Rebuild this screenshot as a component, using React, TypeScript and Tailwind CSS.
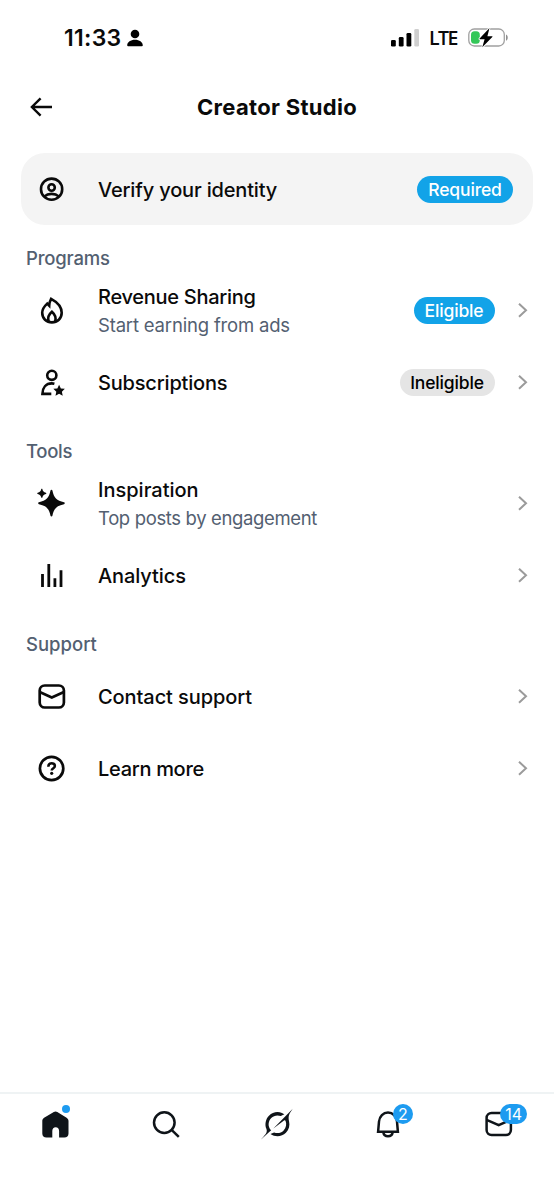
import type { ReactNode } from "react";

interface Item {
  title: string;
  titleClass: string;
  about?: string;
  aboutClass?: string;
  badge?: string;
  badgeClass?: string;
  icon: ReactNode;
}

interface Section {
  name: string;
  nameClass: string;
  items: Item[];
}

const iconProps = {
  width: 28,
  height: 28,
  viewBox: "-0.6 0 28 28",
  fill: "none",
  stroke: "currentColor",
  strokeWidth: 2.6,
  className: "shrink-0 overflow-visible",
};

const AccountIcon = () => (
  <svg {...iconProps}>
    <circle cx="14" cy="14.2" r="10.6" />
    <circle cx="14" cy="12.5" r="3.2" />
    <path d="M6.8 21.4c1.9-1.7 4.4-2.5 7.2-2.5s5.3.8 7.2 2.5" />
  </svg>
);

const FlameIcon = () => (
  <svg {...iconProps}>
    <path d="M13.5 2.8c6.4 3.4 10.6 8.7 10.6 14 0 5.7-4.3 9.6-9.8 9.6s-9.7-3.9-9.7-9.6c0-3.600 2.100-6.500 5-9.200l2 2.100c.1-2.500.7-4.700 1.900-6.900z" />
    <path d="M11.1 25.5c-1.300-3.900.1-7.100 3.200-9.700 3 2.600 4.500 5.800 3.200 9.700" />
  </svg>
);

const SubscriptionsIcon = () => (
  <svg {...iconProps}>
    <circle cx="14.2" cy="7.3" r="4.6" />
    <path d="M16.8 15.7c-.8-.2-1.700-.3-2.600-.3-5.800 0-9.300 4.300-9.400 10.500h8.900" />
    <path
      fill="currentColor"
      stroke="none"
      d="M21.5 16.7l1.75 3.7 4 .45-2.95 2.8.8 4-3.6-2-3.6 2 .8-4-2.95-2.8 4-.45z"
    />
  </svg>
);

const SparkleIcon = () => (
  <svg {...iconProps}>
    <g fill="currentColor" stroke="none">
      <path d="M12.900 1.600c.2-1 1.700-1 1.900 0 1.500 7.400 4.200 10.200 11.600 11.700 1 .2 1 1.700 0 1.900-7.400 1.500-10.100 4.200-11.600 11.600-.2 1-1.700 1-1.900 0-1.500-7.400-4.200-10.100-11.600-11.600-1-.2-1-1.700 0-1.900 7.400-1.500 10.100-4.300 11.600-11.700z" />
      <path d="M3.600.2c.1-.6 1.100-.6 1.200 0 .6 2.200 1.300 2.900 3.500 3.500.6.1.6 1.100 0 1.200-2.200.6-2.900 1.300-3.500 3.500-.1.6-1.100.6-1.200 0-.6-2.200-1.300-2.900-3.500-3.500-.6-.1-.6-1.100 0-1.200 2.200-.6 2.900-1.300 3.500-3.500z" />
    </g>
  </svg>
);

const AnalyticsIcon = () => (
  <svg {...iconProps} strokeWidth={2.8}>
    <path d="M4.900 13v13M11.200 3v23M17.300 17.300V26M23.400 9.300V26" />
  </svg>
);

const MailIcon = () => (
  <svg {...iconProps} strokeWidth={2.7}>
    <rect x="2.100" y="3.500" width="24.200" height="22" rx="5" />
    <path d="M2.100 10.100l12.100 5.400 12.100-5.400" />
  </svg>
);

const HelpIcon = () => (
  <svg {...iconProps} strokeWidth={2.7}>
    <circle cx="14" cy="14.5" r="11.7" />
    <path
      strokeWidth={2.5}
      d="M10.700 12.700c.1-2.200 1.500-3.400 3.400-3.400 1.900 0 3.200 1.100 3.200 2.800 0 2.300-3.200 2-3.200 4.500"
    />
    <circle cx="14.100" cy="19.300" r="1.600" fill="currentColor" stroke="none" />
  </svg>
);

const ChevronIcon = () => (
  <svg
    width="11"
    height="16"
    viewBox="0 0 11 16"
    fill="none"
    stroke="#9b9b9b"
    strokeWidth="2"
    className="ml-[22px] shrink-0"
  >
    <path d="M2 1.800l7 6.500-7 6.500" />
  </svg>
);

const sections: Section[] = [
  {
    name: "Programs",
    nameClass: "tracking-[-0.2px]",
    items: [
      {
        title: "Revenue Sharing",
        titleClass: "tracking-[-0.28px]",
        about: "Start earning from ads",
        aboutClass: "tracking-[-0.18px]",
        badge: "Eligible",
        badgeClass: "w-[81px] bg-[#12a3e8] text-white",
        icon: <FlameIcon />,
      },
      {
        title: "Subscriptions",
        titleClass: "tracking-[-0.18px]",
        badge: "Ineligible",
        badgeClass: "w-[95px] bg-[#e5e5e5] text-black",
        icon: <SubscriptionsIcon />,
      },
    ],
  },
  {
    name: "Tools",
    nameClass: "tracking-[-0.3px]",
    items: [
      {
        title: "Inspiration",
        titleClass: "tracking-normal",
        about: "Top posts by engagement",
        aboutClass: "tracking-[-0.36px]",
        icon: <SparkleIcon />,
      },
      {
        title: "Analytics",
        titleClass: "tracking-[-0.1px]",
        icon: <AnalyticsIcon />,
      },
    ],
  },
  {
    name: "Support",
    nameClass: "tracking-normal",
    items: [
      {
        title: "Contact support",
        titleClass: "tracking-[-0.08px]",
        icon: <MailIcon />,
      },
      {
        title: "Learn more",
        titleClass: "tracking-[-0.3px]",
        icon: <HelpIcon />,
      },
    ],
  },
];

const Badge = ({ text, className }: { text: string; className?: string }) => (
  <span
    className={`flex h-[27px] shrink-0 items-center justify-center rounded-full pt-[2px] text-[17.5px] font-medium tracking-[-0.15px] ${className}`}
  >
    {text}
  </span>
);

const Row = ({ item }: { item: Item }) => (
  <div className="flex h-[72px] items-center pr-[26.5px] pl-[37px]">
    {item.icon}
    <div className="ml-[33px] flex grow flex-col pt-[2px] whitespace-nowrap">
      <span className={`text-[20px] leading-[27px] font-medium ${item.titleClass}`}>
        {item.title}
      </span>
      {item.about && (
        <span
          className={`text-[18.5px] leading-[28px] text-[#536071] ${item.aboutClass}`}
        >
          {item.about}
        </span>
      )}
    </div>
    {item.badge && <Badge text={item.badge} className={item.badgeClass} />}
    <ChevronIcon />
  </div>
);

const StatusBar = () => (
  <div className="flex h-[76px] items-center pr-[45px] pl-[64px]">
    <span className="w-[58px] text-[23px] font-semibold tracking-[0.3px] whitespace-nowrap">
      11:33
    </span>
    <svg width="18" height="18" viewBox="0 0 18 18" className="ml-[4px]">
      <circle cx="9" cy="5" r="4.3" />
      <path d="M1.200 16.300c0-3.200 3.500-5.600 7.800-5.600s7.800 2.400 7.800 5.600c0 .6-.3.900-.9.900H2.100c-.6 0-.9-.3-.9-.9z" />
    </svg>
    <div className="grow" />
    <svg width="28" height="18" viewBox="0 0 28 18">
      <rect x="0" y="11" width="4.8" height="6.5" rx="1.3" />
      <rect x="7.8" y="8" width="4.8" height="9.5" rx="1.3" />
      <rect x="15.5" y="4" width="4.8" height="13.5" rx="1.3" />
      <rect x="23.3" y="0" width="4.7" height="17.5" rx="1.3" fill="#cfcfcf" />
    </svg>
    <span className="ml-[10px] w-[29px] font-['Open_Sans',sans-serif] text-[19.5px] font-semibold tracking-[-1.5px]">
      LTE
    </span>
    <svg width="41" height="20" viewBox="0 0 41 20" className="ml-[10px]">
      <rect
        x=".8"
        y="1"
        width="35.5"
        height="17"
        rx="5.5"
        fill="none"
        stroke="#a0a0a0"
        strokeWidth="1.3"
      />
      <path d="M38 6.600c2.300.6 2.300 5.600 0 6.200z" fill="#8f8f8f" />
      <rect x="3" y="3.3" width="8.8" height="12.5" rx="3.5" fill="#34c759" />
      <path
        d="M21.500 0L11.600 10.500c-.3.400-.1.800.4.800h4.600l-2.300 8 10-10.200c.4-.4.200-.9-.4-.9h-4.500z"
        stroke="#fff"
        strokeWidth="1.8"
        paintOrder="stroke"
      />
    </svg>
  </div>
);

const NavBadge = ({ text, className }: { text: string; className: string }) => (
  <span
    className={`absolute flex h-5 items-center justify-center rounded-full bg-[#1d9bf0] text-[16px] text-white ${className}`}
  >
    {text}
  </span>
);

const BottomNav = () => (
  <nav className="grid h-[108px] grid-cols-5 items-start justify-items-center border-t-2 border-[#eff3f4] pt-[14px] text-[#0f1419]">
    <div className="relative h-8 w-8">
      <svg width="32" height="32" viewBox="0 0 32 32">
        <path
          fill="currentColor"
          d="M14.800 4.100c1.100-.7 2.400-.7 3.500 0l9.300 5.700c1.200.8 1.900 1.900 1.900 3.300v12.300c0 2.500-1.600 4.100-4.100 4.100h-5.300V23c0-2.100-1.300-3.700-3.400-3.700s-3.400 1.600-3.400 3.700v6.500H7.500c-2.600 0-4.200-1.600-4.200-4.100V13.100c0-1.400.6-2.500 1.800-3.300z"
        />
      </svg>
      <span className="absolute top-[-3px] left-[22.5px] h-2 w-2 rounded-full bg-[#1d9bf0]" />
    </div>
    <svg width="32" height="32" viewBox="0 0 32 32" fill="none" stroke="currentColor" strokeWidth="2.5">
      <circle cx="14.3" cy="14.6" r="10.3" />
      <path d="M21.600 21.900l7.200 7" />
    </svg>
    <svg width="32" height="32" viewBox="0 0 33 32" fill="currentColor">
      <path d="M12.745 20.540l10.970-8.190c.539-.4 1.307-.244 1.564.38 1.349 3.288.746 7.241-1.938 9.955-2.683 2.714-6.417 3.310-9.830 1.954l-3.728 1.745c5.347 3.697 11.840 2.782 15.898-1.324 3.219-3.255 4.216-7.692 3.284-11.693l.008.009c-1.351-5.878.332-8.227 3.782-13.031L33 0l-4.540 4.590v-.014L12.743 20.544m-2.263 1.987c-3.837-3.707-3.175-9.446.1-12.755 2.420-2.449 6.388-3.448 9.852-1.979l3.720-1.737c-.67-.49-1.530-1.017-2.515-1.387-4.455-1.854-9.789-.931-13.410 2.728-3.483 3.523-4.579 8.940-2.697 13.561 1.405 3.454-.899 5.898-3.220 8.364C1.490 30.200.666 31.074 0 32l10.478-9.466" />
    </svg>
    <div className="relative h-8 w-8">
      <svg width="32" height="32" viewBox="0 0 32 32" fill="none" stroke="currentColor" strokeWidth="2.5">
        <path d="M7 13.500c.5-5.300 4.200-9 9-9s8.500 3.700 9 9l.9 10.300H6.100z" />
        <path d="M11.200 24c.5 2.800 2.200 4.300 4.800 4.300s4.300-1.500 4.800-4.300" />
      </svg>
      <NavBadge text="2" className="top-[-4px] left-[21px] w-5" />
    </div>
    <div className="relative h-8 w-8">
      <svg width="32" height="32" viewBox="0 0 32 32" fill="none" stroke="currentColor" strokeWidth="2.5">
        <rect x="3.6" y="5" width="24.3" height="22" rx="5" />
        <path d="M3.600 11.800l12.100 5.400 12.200-5.400" />
      </svg>
      <NavBadge text="14" className="top-[-4px] left-[17.5px] w-[27px]" />
    </div>
  </nav>
);

const App = () => {
  return (
    <div className="flex h-[1200px] w-[554px] flex-col overflow-hidden bg-white font-[Inter,sans-serif] text-[#0a0a0a]">
      <StatusBar />
      <header className="grid h-[62px] grid-cols-[1fr_auto_1fr] items-center px-[30px]">
        <svg width="22" height="20" viewBox="0 0 22 20" fill="none" stroke="currentColor" strokeWidth="2.4">
          <path d="M10.600 1.300L1.900 10l8.700 8.700M2 10h20" />
        </svg>
        <h1 className="text-[22px] font-bold tracking-[0.3px]">Creator Studio</h1>
      </header>

      <main className="mt-[15px] grow">
        <div className="mx-[21px] flex h-[72px] items-center rounded-[24px] bg-[#f4f4f4] pr-[20px] pl-[16px]">
          <AccountIcon />
          <span className="ml-[33px] grow pt-px text-[20px] font-medium tracking-[-0.16px]">
            Verify your identity
          </span>
          <Badge text="Required" className="w-[96px] bg-[#12a3e8] text-white" />
        </div>
        {sections.map((section) => (
          <section key={section.name}>
            <h2
              className={`flex h-[49px] items-center pt-[19px] pl-[26px] text-[18.5px] font-medium text-[#536071] ${section.nameClass}`}
            >
              {section.name}
            </h2>
            {section.items.map((item) => (
              <Row key={item.title} item={item} />
            ))}
          </section>
        ))}
      </main>

      <BottomNav />
    </div>
  );
};

export default App;
